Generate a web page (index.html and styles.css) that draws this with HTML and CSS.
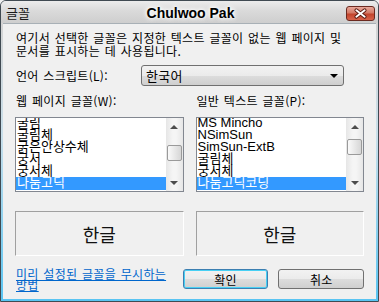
FILE: index.html
```html
<!DOCTYPE html>
<html lang="ko">
<head>
  <meta charset="UTF-8" />
  <title>글꼴</title>
  <link rel="stylesheet" href="styles.css">
</head>
<body>
  <div class="window">
    <div class="titlebar">
      <span class="app-name">글꼴</span>
      <span class="title">Chulwoo Pak</span>
      <div class="close">
        <svg width="29" height="15" viewBox="0 0 29 15">
          <path d="M10 4 L19 11 M19 4 L10 11" stroke="#5a1a10" stroke-width="4" stroke-linecap="round" />
          <path d="M10 4 L19 11 M19 4 L10 11" stroke="#ffffff" stroke-width="2" stroke-linecap="round" />
        </svg>
      </div>
    </div>
    <div class="client">
      <p class="desc">여기서 선택한 글꼴은 지정한 텍스트 글꼴이 없는 웹 페이지 및<br>문서를 표시하는 데 사용됩니다.</p>
      <div class="script-row">
        <label class="script-label">언어 스크립트(L):</label>
        <div class="select">
          <span>한국어</span>
          <span class="arrow"></span>
        </div>
      </div>
      <div class="font-cols">
        <div class="col">
          <label class="col-label">웹 페이지 글꼴(W):</label>
          <div class="listbox">
            <ul class="items">
              <li>굴림</li>
              <li>굴림체</li>
              <li>굵은안상수체</li>
              <li>궁서</li>
              <li>궁서체</li>
              <li class="selected">나눔고딕</li>
            </ul>
            <div class="scrollbar">
              <div class="sb-btn"><span class="up"></span></div>
              <div class="sb-track thumb-low"><div class="thumb"></div></div>
              <div class="sb-btn"><span class="down"></span></div>
            </div>
          </div>
          <div class="preview">한글</div>
        </div>
        <div class="col">
          <label class="col-label">일반 텍스트 글꼴(P):</label>
          <div class="listbox">
            <ul class="items">
              <li>MS Mincho</li>
              <li>NSimSun</li>
              <li>SimSun-ExtB</li>
              <li>굴림체</li>
              <li>궁서체</li>
              <li class="selected">나눔고딕코딩</li>
            </ul>
            <div class="scrollbar">
              <div class="sb-btn"><span class="up"></span></div>
              <div class="sb-track thumb-high"><div class="thumb"></div></div>
              <div class="sb-btn"><span class="down"></span></div>
            </div>
          </div>
          <div class="preview">한글</div>
        </div>
      </div>
      <div class="bottom-row">
        <a href="#" class="link">미리 설정된 글꼴을 무시하는 방법</a>
        <button class="btn default">확인</button>
        <button class="btn">취소</button>
      </div>
    </div>
  </div>
</body>
</html>
```

FILE: styles.css
```css
html, body {
  margin: 0;
  padding: 0;
}
body {
  width: 379px;
  height: 302px;
  overflow: hidden;
  font-family: "Noto Sans CJK KR", "Liberation Sans", sans-serif;
  font-size: 12px;
  color: #000;
  background-color: #f0f0f0;
}
.window {
  box-sizing: border-box;
  width: 379px;
  height: 302px;
  border: 1px solid #404a52;
  border-radius: 6px 6px 0 0;
  background: linear-gradient(to bottom, #e2e2e2 0, #d4d4d4 22px, #c9dfea 45%, #58c4f2 100%);
  display: flex;
  flex-direction: column;
}
.titlebar {
  height: 22px;
  display: grid;
  grid-template-columns: 1fr auto 1fr;
  align-items: center;
  padding: 0 3px 0 5px;
  background: linear-gradient(to bottom, #ececec 0, #dadada 45%, #cecece 100%);
  border-radius: 5px 5px 0 0;
}
.app-name {
  font-size: 13px;
  color: #1a1a1a;
}
.title {
  font-family: "Liberation Sans", sans-serif;
  font-weight: bold;
  font-size: 14px;
  color: #000;
  text-shadow: 0 0 3px #fff, 0 0 5px #fff, 0 0 6px #fff;
  padding-top: 1px;
}
.close {
  justify-self: end;
  width: 29px;
  height: 15px;
  margin-top: 2px;
  border: 1px solid #6b2a20;
  border-radius: 3px;
  background: linear-gradient(to bottom, #e8a89a 0, #d47a66 45%, #c2442c 55%, #d9634a 100%);
  box-sizing: border-box;
  display: flex;
  align-items: center;
  justify-content: center;
  overflow: hidden;
}
.client {
  flex: 1;
  margin: 0 2px 2px 2px;
  border-top: 1px solid #a8b0b6;
  background-color: #f0f0f0;
  padding: 0 12px 0 12px;
  display: flex;
  flex-direction: column;
  letter-spacing: 0.3px;
  word-spacing: 1px;
}
.desc {
  margin: 7px 0 0 1px;
  line-height: 13px;
}
.script-row {
  display: flex;
  align-items: center;
  margin-top: 8px;
}
.script-label {
  width: 125px;
  padding-left: 1px;
}
.select {
  box-sizing: border-box;
  width: 203px;
  height: 21px;
  border: 1px solid #707070;
  border-radius: 3px;
  background: linear-gradient(to bottom, #f2f2f2 0, #ebebeb 50%, #dddddd 50%, #cfcfcf 100%);
  display: flex;
  align-items: center;
  justify-content: space-between;
  padding: 0 5px 0 4px;
  font-size: 13px;
}
.arrow {
  width: 0;
  height: 0;
  border-left: 4px solid transparent;
  border-right: 4px solid transparent;
  border-top: 4px solid #000;
}
.font-cols {
  display: grid;
  grid-template-columns: 1fr 1fr;
  column-gap: 12px;
  margin-top: 8px;
}
.col {
  display: flex;
  flex-direction: column;
}
.col-label {
  padding-left: 1px;
  line-height: 14px;
}
.listbox {
  box-sizing: border-box;
  height: 75px;
  margin-top: 9px;
  border: 1px solid #828790;
  background-color: #fff;
  display: flex;
  overflow: hidden;
  letter-spacing: 0;
  word-spacing: 0;
}
.items {
  flex: 1;
  list-style: none;
  margin: -1px 0 0 0;
  padding: 0;
  font-family: "Liberation Sans", "Noto Sans CJK KR", sans-serif;
  font-size: 13px;
}
.items li {
  height: 12px;
  line-height: 11px;
  padding-left: 1px;
  white-space: nowrap;
}
.items li.selected {
  background-color: #3399ff;
  color: #fff;
  height: 13px;
}
.scrollbar {
  width: 17px;
  display: flex;
  flex-direction: column;
  background: linear-gradient(to right, #e6e6e6, #f5f5f5 40%, #f5f5f5 60%, #e6e6e6);
}
.sb-btn {
  height: 17px;
  display: flex;
  align-items: center;
  justify-content: center;
}
.up {
  border-left: 4px solid transparent;
  border-right: 4px solid transparent;
  border-bottom: 4px solid #4d4d4d;
}
.down {
  border-left: 4px solid transparent;
  border-right: 4px solid transparent;
  border-top: 4px solid #4d4d4d;
}
.sb-track {
  flex: 1;
  display: flex;
  flex-direction: column;
}
.thumb-low {
  padding-top: 10px;
}
.thumb-high {
  padding-top: 4px;
}
.thumb {
  box-sizing: border-box;
  height: 16px;
  margin: 0 1px;
  border: 1px solid #9a9a9a;
  border-radius: 2px;
  background: linear-gradient(to right, #fafafa, #e8e8e8 50%, #d6d6d6);
}
.preview {
  box-sizing: border-box;
  height: 45px;
  margin-top: 19px;
  border-top: 1px solid #a0a0a0;
  border-left: 1px solid #a0a0a0;
  border-right: 1px solid #fff;
  border-bottom: 1px solid #fff;
  display: flex;
  align-items: center;
  justify-content: center;
  font-size: 18px;
  letter-spacing: 0;
  color: #111;
}
.bottom-row {
  display: flex;
  align-items: flex-start;
  margin-top: 12px;
}
.link {
  width: 158px;
  margin-right: 9px;
  color: #0066cc;
  line-height: 11px;
  text-decoration: underline;
  padding-left: 1px;
}
.btn {
  box-sizing: border-box;
  width: 86px;
  height: 20px;
  margin-top: 1px;
  margin-left: 10px;
  padding: 0;
  border: 1px solid #707070;
  border-radius: 3px;
  background: linear-gradient(to bottom, #f2f2f2 0, #ebebeb 50%, #dddddd 50%, #cfcfcf 100%);
  font-family: "Noto Sans CJK KR", sans-serif;
  font-size: 12px;
  letter-spacing: 0;
  color: #000;
}
.btn.default {
  margin-left: 0;
  border-color: #3c7fb1;
  box-shadow: inset 0 0 0 1px #48d0f4;
}
```
